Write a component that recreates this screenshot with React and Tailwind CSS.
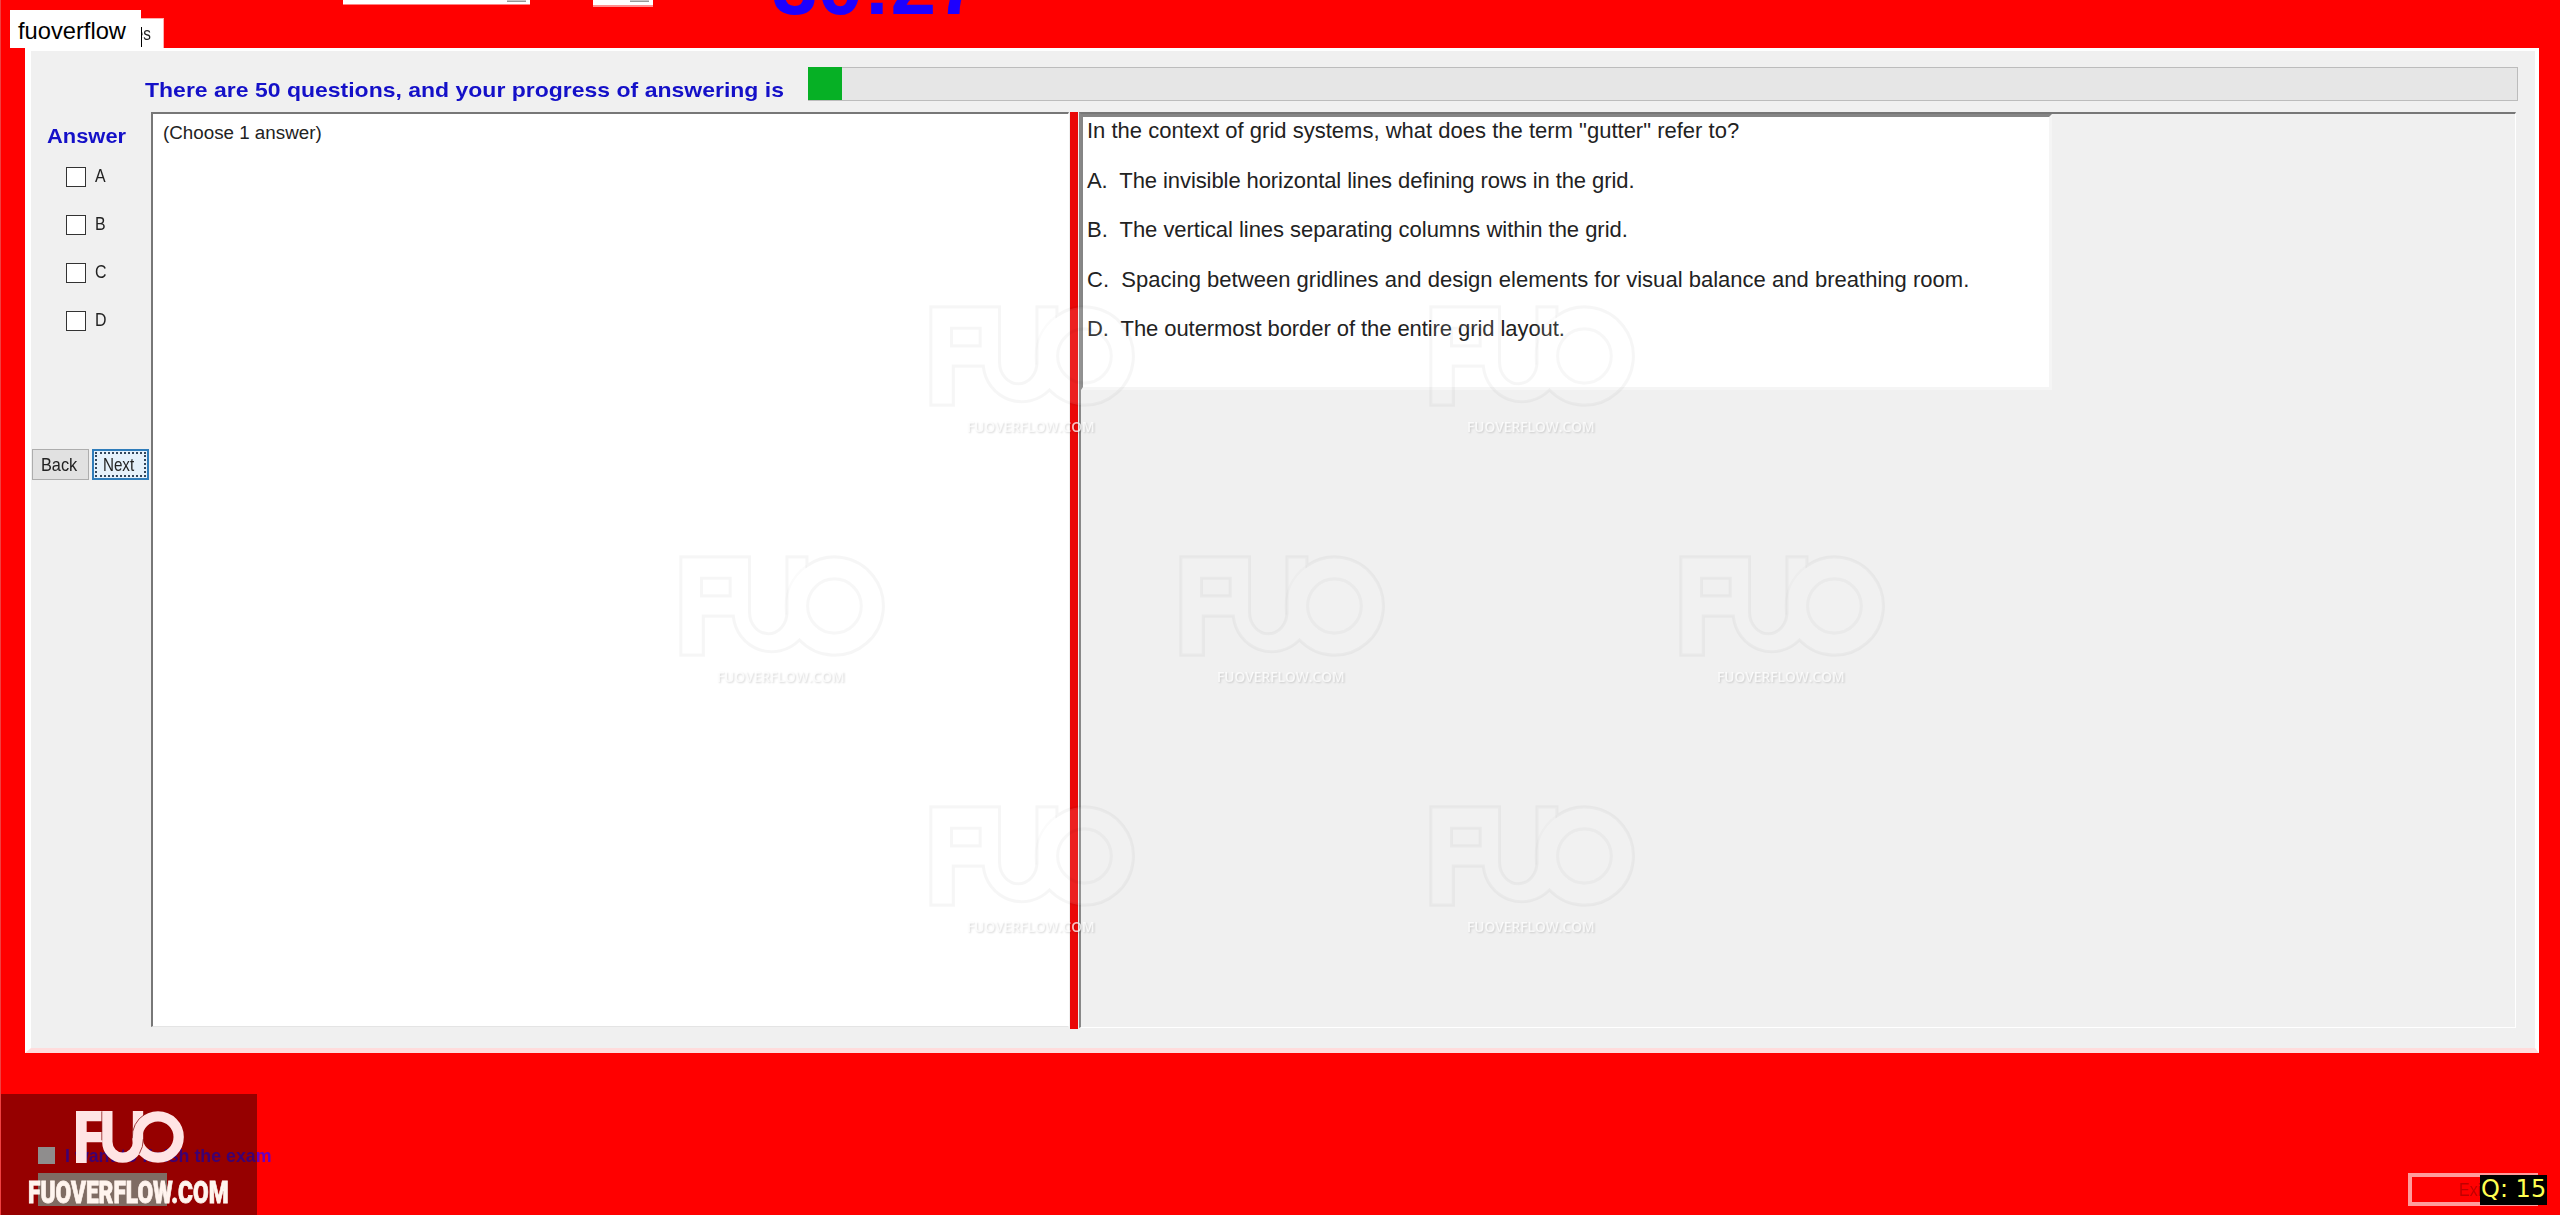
import React, { useState } from 'react';

const options = ['A', 'B', 'C', 'D'];

const questionLines = [
  { text: 'In the context of grid systems, what does the term "gutter" refer to?', tracking: 'tracking-[0.01px]' },
  { text: 'A.  The invisible horizontal lines defining rows in the grid.', tracking: 'tracking-[-0.08px]' },
  { text: 'B.  The vertical lines separating columns within the grid.', tracking: 'tracking-[-0.03px]' },
  { text: 'C.  Spacing between gridlines and design elements for visual balance and breathing room.', tracking: 'tracking-[0.02px]' },
  { text: 'D.  The outermost border of the entire grid layout.', tracking: 'tracking-[-0.07px]' },
];

const watermarks = [
  { x: 931, y: 307 },
  { x: 1431, y: 307 },
  { x: 681, y: 557 },
  { x: 1181, y: 557 },
  { x: 1681, y: 557 },
  { x: 931, y: 807 },
  { x: 1431, y: 807 },
];

const LogoMark = ({ className }) => (
  <svg viewBox="0 0 324 156" preserveAspectRatio="none" className={className}>
    <path d="M0 0H79V31H32V63H79V94H32V156H0Z" fill="currentColor" />
    <path d="M94 0V92A46 48 0 0 0 186 92V0" fill="none" stroke="currentColor" strokeWidth="31" />
    <circle cx="246" cy="78" r="62" fill="none" stroke="currentColor" strokeWidth="31" />
    <path d="M77 1V88" stroke="#8b1a1a" strokeWidth="2" />
    <path d="M206 10A78 78 0 0 0 169 82" fill="none" stroke="#8b1a1a" strokeWidth="2.5" />
    <path d="M202 84Q202 108 190 128" fill="none" stroke="#8b1a1a" strokeWidth="2.5" />
  </svg>
);

const WatermarkMark = () => (
  <svg viewBox="-3 -3 330 162" preserveAspectRatio="none" className="w-[206px] h-[102px] blur-[0.7px]">
    <path
      d="M0 0H110V88A30 34 0 0 0 170 88V0H202V14A78 78 0 1 1 190 132A62 62 0 0 1 84 94H36V156H0ZM33 34H79V62H33Z"
      fill="#ffffff"
      fillOpacity="0.1"
      stroke="#000000"
      strokeOpacity="0.035"
      strokeWidth="5"
      fillRule="evenodd"
    />
    <path d="M202 14A78 78 0 0 0 169 92" fill="none" stroke="#000000" strokeOpacity="0.015" strokeWidth="4" />
    <circle cx="246" cy="78" r="43" fill="none" stroke="#000000" strokeOpacity="0.03" strokeWidth="5" />
  </svg>
);

const Watermark = ({ x, y }) => (
  <div className="absolute pointer-events-none w-[206px]" style={{ left: x - 3, top: y - 2 }}>
    <WatermarkMark />
    <div className="mt-[10px] ml-[38px] w-[130px] text-[14px] leading-[20px] whitespace-nowrap text-white/75 font-['Open_Sans',sans-serif] font-semibold [text-shadow:1px_1px_2px_rgba(0,0,0,0.16)]">
      <span className="inline-block origin-left scale-x-[0.98]">FUOVERFLOW.COM</span>
    </div>
  </div>
);

const Header = () => (
  <header className="flex items-start h-[48px]">
    <div className="self-end ml-[25px] w-[139px] h-[30px] bg-white border-t border-r border-[#ffb0b0] flex justify-end pr-[12px] text-[18px] leading-[30px] text-[#222]">
      <span className="inline-block origin-right scale-x-[0.85]">es</span>
    </div>
    <div className="ml-[179px] w-[187px] h-[5px] bg-white border-b border-[#ff8080] flex justify-end">
      <div className="w-[19px] h-[2px] mr-[4px] bg-[#c8c8c8] border-b border-[#999]" />
    </div>
    <div className="ml-[63px] w-[60px] h-[7px] bg-white border-b-2 border-[#ff9090] flex justify-end">
      <div className="w-[19px] h-[2px] mr-[4px] bg-[#c8c8c8] border-b border-[#999]" />
    </div>
    <div className="ml-[119px] -mt-[60px] text-[82px] leading-[92px] font-bold text-[#1d00ff]">30:27</div>
  </header>
);

const Sidebar = ({ checked, onToggle }) => (
  <aside className="w-[120px] shrink-0">
    <div className="mt-[9px] ml-[16px] text-[20px] leading-[30px] font-bold text-[#1410c8] origin-left scale-x-[1.095] w-[73px]">Answer</div>
    <div className="mt-[16px] ml-[35px] flex flex-col gap-[28px]">
      {options.map((option) => (
        <label key={option} className="flex items-center h-[20px] gap-[9px]">
          <span className="w-[20px] h-[20px] border border-[#333] bg-white" onClick={() => onToggle(option)}>
            {checked === option && <span className="block m-1 h-[10px] bg-[#333]" />}
          </span>
          <span className="mb-[3px] text-[18.5px] leading-[20px] text-[#222] origin-left scale-x-[0.86]">{option}</span>
        </label>
      ))}
    </div>
    <div className="mt-[118px] ml-px flex gap-[3px]">
      <button className="w-[57px] h-[31px] bg-[#e1e1e1] border border-[#adadad] text-[19px] leading-[29px] text-[#222]">
        <span className="inline-block -ml-[7px] -mr-[5px] scale-x-[0.86]">Back</span>
      </button>
      <button className="w-[57px] h-[31px] bg-[#e5f1fb] border-2 border-[#2f7cba] p-px text-[19px] text-[#222]">
        <span className="block h-full border-2 border-dotted border-[#33475c] leading-[21px]">
          <span className="inline-block -ml-[8px] -mr-[5px] scale-x-[0.8]">Next</span>
        </span>
      </button>
    </div>
  </aside>
);

const QuestionPanel = () => (
  <section className="w-[1437px] h-[916px] border-t-2 border-l-2 border-t-[#777] border-l-[#888] border-r border-b border-r-white border-b-white">
    <div className="w-[971px] h-[276px] border-t-[3px] border-l-2 border-t-[#858585] border-l-[#858585] border-r-[3px] border-b-[3px] border-r-[#f5f5f5] border-b-[#f5f5f5] bg-white pl-[4px] text-[22px] leading-[30px] text-[#222] whitespace-pre">
      <div className="-mt-px">
        {questionLines.map(({ text, tracking }) => (
          <p key={text} className={`mb-[19.5px] ${tracking}`}>{text}</p>
        ))}
      </div>
    </div>
  </section>
);

const Footer = () => (
  <footer className="flex justify-between pt-[93px]">
    <div className="ml-[38px] w-[260px]">
      <div className="flex items-end gap-[10px] h-[18px]">
        <span className="w-[17px] h-[17px] bg-[#f4f0f0]" />
        <span className="text-[17.8px] leading-[20px] h-[18px] font-bold whitespace-nowrap text-[#6a00c0] blur-[0.6px]">I want to finish the exam</span>
      </div>
      <div className="mt-[9px] w-[129px] h-[33px] bg-[#d8b8a8]" />
    </div>
    <div className="mt-[27px] mr-[22px] w-[130px] h-[33px] border-4 border-[#ff9c9c] pl-[47px] text-[19px] leading-[25px] text-[#c00000]">
      <span className="inline-block origin-left scale-x-[0.85]">Exit</span>
    </div>
  </footer>
);

const BrandBadge = () => (
  <div className="absolute -left-px bottom-0 w-[257px] h-[121px] bg-black/[0.41]">
    <LogoMark className="ml-[76px] mt-[17px] w-[108px] h-[52px] text-[#ffe4e4]" />
    <div className="mt-[15px] ml-[28px] text-[31px] leading-[30px] font-black whitespace-nowrap font-['Roboto',sans-serif] text-[#fff4ee] origin-left scale-x-[0.732] [-webkit-text-stroke:0.8px_#fff4ee] w-[270px]">
      FUOVERFLOW.COM
    </div>
  </div>
);

export default function App() {
  const [checked, setChecked] = useState(null);

  return (
    <div className="relative w-[2560px] h-[1215px] overflow-hidden bg-[#ff0000] border-l border-[#f04040] font-['Liberation_Sans',Arial,sans-serif]">
      <div className="-ml-px">
        <Header />
        <main className="ml-[25px] w-[2514px] h-[1005px] bg-[#f0f0f0] border-t-[3px] border-l-[6px] border-r-[4px] border-b-[5px] border-white border-b-[#ffdcdc]">
          <div className="flex h-[61px]">
            <div className="mt-[24px] ml-[114px] w-[663px] text-[21px] leading-[30px] font-bold whitespace-nowrap text-[#1410c8]">
              <span className="inline-block origin-left scale-x-[1.095]">There are 50 questions, and your progress of answering is</span>
            </div>
            <div className="mt-[16px] w-[1710px] h-[34px] bg-[#e6e6e6] border border-[#bcbcbc]">
              <div className="-mt-px -ml-px w-[34px] h-[33px] bg-[#06b025]" />
            </div>
          </div>
          <div className="flex">
            <Sidebar checked={checked} onToggle={setChecked} />
            <section className="w-[918px] h-[915px] bg-white border-t-2 border-l-2 border-[#777] border-r border-b border-r-white border-b-[#e4e4e4] pt-[3px] pl-[10px] text-[18.8px] leading-[32px] text-[#222]">
              (Choose 1 answer)
            </section>
            <div className="ml-px w-[8px] h-[917px] bg-[#ea0808]" />
            <div className="w-px" />
            <QuestionPanel />
          </div>
        </main>
        <Footer />
      </div>

      {watermarks.map((mark) => (
        <Watermark key={`${mark.x}-${mark.y}`} x={mark.x} y={mark.y} />
      ))}

      <div className="absolute left-[9px] top-[10px] w-[131px] h-[38px] bg-white pl-[8px] text-[23.7px] leading-[44px] text-black">
        <span className="block -mt-[1px]">fuoverflow</span>
      </div>
      <div className="absolute left-[140px] top-[27px] w-px h-[20px] bg-black" />
      <BrandBadge />
      <div className="absolute left-[2479px] top-[1175px] w-[67px] h-[30px] bg-black pl-px text-[24px] leading-[29px] whitespace-nowrap text-[#ffff50] font-['DejaVu_Sans',sans-serif]">
        Q: 15
      </div>
    </div>
  );
}
